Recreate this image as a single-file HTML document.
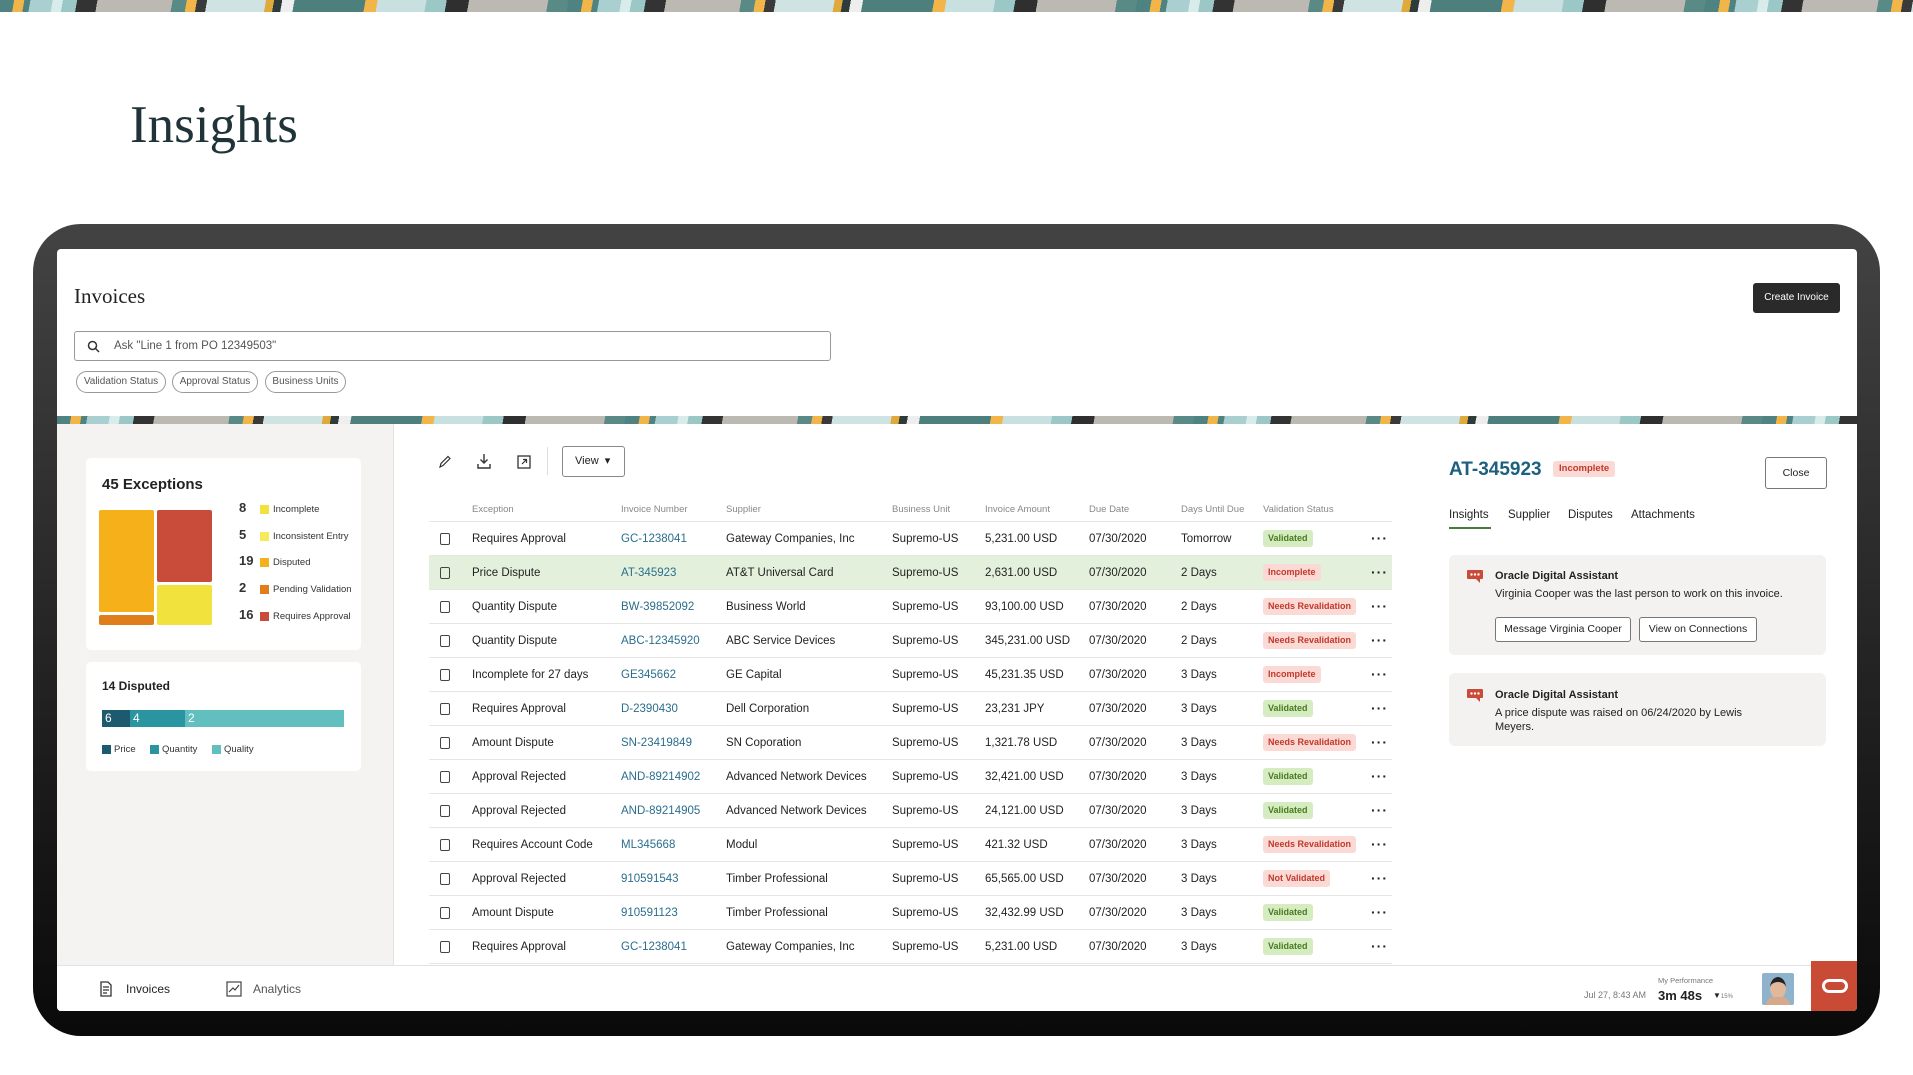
<!DOCTYPE html>
<html><head><meta charset="utf-8"><style>
*{box-sizing:border-box;margin:0;padding:0}
body{width:1913px;height:1075px;background:#fff;position:relative;overflow:hidden;font-family:"Liberation Sans",sans-serif;color:#222}
.abs{position:absolute}
.stripe{background:repeating-linear-gradient(100deg,#4e8381 0 14px,#f2b54a 14px 24px,#4e8381 24px 30px,#a9cfd0 30px 52px,#d9ecec 52px 62px,#9cc7c7 62px 76px,#333 76px 96px,#bcb8b2 96px 170px,#5a8a86 170px 184px,#f2b54a 184px 194px,#3a3a3a 194px 204px,#d0e3e3 204px 262px,#e0a93c 262px 270px,#2f3a3a 270px 278px,#eee 278px 290px,#4d7f7c 290px 360px,#f2b54a 360px 372px,#c9e0e0 372px 420px,#9cc7c7 420px 440px,#2f2f2f 440px 462px,#bcb8b2 462px 540px,#5a8a86 540px 560px)}
.serif{font-family:"Liberation Serif",serif}
.n{font-family:"Liberation Sans Narrow","Liberation Sans",sans-serif}
.chip{position:absolute;top:371px;height:22px;border:1px solid #999;border-radius:11px;font-size:10px;color:#555;line-height:20px;text-align:center}
.row{position:absolute;left:429px;width:963px;height:34px;border-bottom:1px solid #e6e6e6;font-size:11.5px}
.row span{position:absolute;top:11px;white-space:nowrap}
.cb{position:absolute;left:11px;top:11px;width:10px;height:12px;border:1.5px solid #444;border-radius:2px}
.lk{color:#2a6e8c}
.bd{position:absolute;top:8px;height:17px;border-radius:3px;font-size:9px;font-weight:bold;line-height:17px;padding:0 5px;white-space:nowrap}
.ok{background:#d4ecc0;color:#4a7a22}
.bad{background:#fbd9d4;color:#c0392b}
.dots{position:absolute;left:942px;top:8px;font-size:14px;font-weight:bold;letter-spacing:1px}
.hd{position:absolute;top:504px;font-size:9.5px;color:#888}
.lg{position:absolute;font-size:9.5px;color:#333}
.lg b{position:absolute;left:-34px;font-size:13px;top:-4px}
.lg i{position:absolute;left:-13px;top:1px;width:9px;height:9px}
.card{position:absolute;left:1449px;width:377px;background:#f3f2f0;border-radius:6px}
.btn{position:absolute;height:25px;border:1px solid #777;border-radius:3px;font-size:10.5px;line-height:23px;text-align:center;background:#fff}
</style></head><body>
<div class="abs stripe" style="left:0;top:0;width:1913px;height:12px"></div>
<div class="abs serif" style="left:130px;top:95px;font-size:53px;color:#1f3338">Insights</div>

<div class="abs" style="left:33px;top:224px;width:1847px;height:812px;border-radius:48px;background:linear-gradient(180deg,#434343,#1a1a1a 70%,#0a0a0a)"></div>
<div class="abs" style="left:57px;top:249px;width:1800px;height:762px;background:#fff;border-radius:4px;overflow:hidden">
</div>
<div class="abs serif" style="left:74px;top:284px;font-size:21px;color:#222">Invoices</div>
<div class="abs" style="left:1753px;top:283px;width:87px;height:30px;background:#2a2a2a;border-radius:3px;color:#fff;font-size:10px;line-height:30px;text-align:center">Create Invoice</div>
<div class="abs" style="left:74px;top:331px;width:757px;height:30px;border:1px solid #999;border-radius:3px"></div>
<svg class="abs" style="left:87px;top:340px" width="13" height="13" viewBox="0 0 13 13"><circle cx="5.5" cy="5.5" r="4" fill="none" stroke="#333" stroke-width="1.5"/><path d="M8.5 8.5L12 12" stroke="#333" stroke-width="1.5"/></svg>
<div class="abs n" style="left:114px;top:340px;font-size:11.5px;color:#555">Ask "Line 1 from PO 12349503"</div>
<div class="chip n" style="left:76px;width:90px">Validation Status</div>
<div class="chip n" style="left:172px;width:86px">Approval Status</div>
<div class="chip n" style="left:265px;width:81px">Business Units</div>
<div class="abs stripe" style="left:57px;top:416px;width:1800px;height:8px"></div>

<div class="abs" style="left:57px;top:424px;width:337px;height:541px;background:#f4f3f1;border-right:1px solid #e4e4e4"></div>
<div class="abs" style="left:86px;top:458px;width:275px;height:192px;background:#fff;border-radius:5px"></div>
<div class="abs" style="left:102px;top:476px;font-size:15px;font-weight:bold">45 Exceptions</div>
<div class="abs" style="left:99px;top:510px;width:55px;height:102px;background:#f6b01a;border-radius:2px"></div>
<div class="abs" style="left:99px;top:615px;width:55px;height:10px;background:#e07e1c;border-radius:2px"></div>
<div class="abs" style="left:157px;top:510px;width:55px;height:72px;background:#c94b3a;border-radius:2px"></div>
<div class="abs" style="left:157px;top:585px;width:55px;height:40px;background:#f2e23e;border-radius:2px"></div>
<div class="lg" style="left:273px;top:504px"><b>8</b><i style="background:#f2e23e"></i>Incomplete</div>
<div class="lg" style="left:273px;top:531px"><b>5</b><i style="background:#f5ea5a"></i>Inconsistent Entry</div>
<div class="lg" style="left:273px;top:557px"><b>19</b><i style="background:#f6b01a"></i>Disputed</div>
<div class="lg" style="left:273px;top:584px"><b>2</b><i style="background:#e07e1c"></i>Pending Validation</div>
<div class="lg" style="left:273px;top:611px"><b>16</b><i style="background:#c94b3a"></i>Requires Approval</div>

<div class="abs" style="left:86px;top:662px;width:275px;height:109px;background:#fff;border-radius:5px"></div>
<div class="abs" style="left:102px;top:679px;font-size:12px;font-weight:bold">14 Disputed</div>
<div class="abs" style="left:102px;top:710px;width:28px;height:17px;background:#1e5a6e;color:#fff;font-size:12px;padding-left:3px;line-height:17px">6</div>
<div class="abs" style="left:130px;top:710px;width:55px;height:17px;background:#2a95a0;color:#fff;font-size:12px;padding-left:3px;line-height:17px">4</div>
<div class="abs" style="left:185px;top:710px;width:159px;height:17px;background:#62bfc0;color:#fff;font-size:12px;padding-left:3px;line-height:17px">2</div>
<div class="lg" style="left:102px;top:744px"><i style="left:0;background:#1e5a6e"></i><span style="margin-left:12px">Price</span></div>
<div class="lg" style="left:150px;top:744px"><i style="left:0;background:#2a95a0"></i><span style="margin-left:12px">Quantity</span></div>
<div class="lg" style="left:212px;top:744px"><i style="left:0;background:#62bfc0"></i><span style="margin-left:12px">Quality</span></div>

<svg class="abs" style="left:437px;top:454px" width="16" height="16" viewBox="0 0 16 16"><path d="M3 13L4 9.5 11 2.5 13 4.5 6 11.5Z" fill="none" stroke="#333" stroke-width="1.2"/></svg>
<svg class="abs" style="left:476px;top:453px" width="16" height="17" viewBox="0 0 16 17"><path d="M8 1V10M4.5 6.5L8 10 11.5 6.5M2 11V15H14V11" fill="none" stroke="#333" stroke-width="1.4"/></svg>
<svg class="abs" style="left:516px;top:454px" width="16" height="16" viewBox="0 0 16 16"><rect x="2" y="2" width="12" height="12" fill="none" stroke="#333" stroke-width="1.3"/><path d="M6 10L10.5 5.5M7 5.5H10.5V9" fill="none" stroke="#333" stroke-width="1.2"/></svg>
<div class="abs" style="left:547px;top:447px;width:1px;height:28px;background:#ddd"></div>
<div class="abs n" style="left:562px;top:446px;width:63px;height:31px;border:1px solid #888;border-radius:3px;font-size:11px;line-height:29px;padding-left:12px">View &nbsp;&#9662;</div>

<div class="hd n" style="left:472px">Exception</div>
<div class="hd n" style="left:621px">Invoice Number</div>
<div class="hd n" style="left:726px">Supplier</div>
<div class="hd n" style="left:892px">Business Unit</div>
<div class="hd n" style="left:985px">Invoice Amount</div>
<div class="hd n" style="left:1089px">Due Date</div>
<div class="hd n" style="left:1181px">Days Until Due</div>
<div class="hd n" style="left:1263px">Validation Status</div>
<div class="abs" style="left:429px;top:521px;width:963px;height:1px;background:#e6e6e6"></div>

<div class="n">
<div class="row" style="top:522px"><i class="cb"></i><span style="left:43px">Requires Approval</span><span class="lk" style="left:192px">GC-1238041</span><span style="left:297px">Gateway Companies, Inc</span><span style="left:463px">Supremo-US</span><span style="left:556px">5,231.00 USD</span><span style="left:660px">07/30/2020</span><span style="left:752px">Tomorrow</span><b class="bd ok" style="left:834px">Validated</b><b class="dots">···</b></div>
<div class="row" style="top:556px;background:#e3f1dc"><i class="cb"></i><span style="left:43px">Price Dispute</span><span class="lk" style="left:192px">AT-345923</span><span style="left:297px">AT&amp;T Universal Card</span><span style="left:463px">Supremo-US</span><span style="left:556px">2,631.00 USD</span><span style="left:660px">07/30/2020</span><span style="left:752px">2 Days</span><b class="bd bad" style="left:834px">Incomplete</b><b class="dots">···</b></div>
<div class="row" style="top:590px"><i class="cb"></i><span style="left:43px">Quantity Dispute</span><span class="lk" style="left:192px">BW-39852092</span><span style="left:297px">Business World</span><span style="left:463px">Supremo-US</span><span style="left:556px">93,100.00 USD</span><span style="left:660px">07/30/2020</span><span style="left:752px">2 Days</span><b class="bd bad" style="left:834px">Needs Revalidation</b><b class="dots">···</b></div>
<div class="row" style="top:624px"><i class="cb"></i><span style="left:43px">Quantity Dispute</span><span class="lk" style="left:192px">ABC-12345920</span><span style="left:297px">ABC Service Devices</span><span style="left:463px">Supremo-US</span><span style="left:556px">345,231.00 USD</span><span style="left:660px">07/30/2020</span><span style="left:752px">2 Days</span><b class="bd bad" style="left:834px">Needs Revalidation</b><b class="dots">···</b></div>
<div class="row" style="top:658px"><i class="cb"></i><span style="left:43px">Incomplete for 27 days</span><span class="lk" style="left:192px">GE345662</span><span style="left:297px">GE Capital</span><span style="left:463px">Supremo-US</span><span style="left:556px">45,231.35 USD</span><span style="left:660px">07/30/2020</span><span style="left:752px">3 Days</span><b class="bd bad" style="left:834px">Incomplete</b><b class="dots">···</b></div>
<div class="row" style="top:692px"><i class="cb"></i><span style="left:43px">Requires Approval</span><span class="lk" style="left:192px">D-2390430</span><span style="left:297px">Dell Corporation</span><span style="left:463px">Supremo-US</span><span style="left:556px">23,231 JPY</span><span style="left:660px">07/30/2020</span><span style="left:752px">3 Days</span><b class="bd ok" style="left:834px">Validated</b><b class="dots">···</b></div>
<div class="row" style="top:726px"><i class="cb"></i><span style="left:43px">Amount Dispute</span><span class="lk" style="left:192px">SN-23419849</span><span style="left:297px">SN Coporation</span><span style="left:463px">Supremo-US</span><span style="left:556px">1,321.78 USD</span><span style="left:660px">07/30/2020</span><span style="left:752px">3 Days</span><b class="bd bad" style="left:834px">Needs Revalidation</b><b class="dots">···</b></div>
<div class="row" style="top:760px"><i class="cb"></i><span style="left:43px">Approval Rejected</span><span class="lk" style="left:192px">AND-89214902</span><span style="left:297px">Advanced Network Devices</span><span style="left:463px">Supremo-US</span><span style="left:556px">32,421.00 USD</span><span style="left:660px">07/30/2020</span><span style="left:752px">3 Days</span><b class="bd ok" style="left:834px">Validated</b><b class="dots">···</b></div>
<div class="row" style="top:794px"><i class="cb"></i><span style="left:43px">Approval Rejected</span><span class="lk" style="left:192px">AND-89214905</span><span style="left:297px">Advanced Network Devices</span><span style="left:463px">Supremo-US</span><span style="left:556px">24,121.00 USD</span><span style="left:660px">07/30/2020</span><span style="left:752px">3 Days</span><b class="bd ok" style="left:834px">Validated</b><b class="dots">···</b></div>
<div class="row" style="top:828px"><i class="cb"></i><span style="left:43px">Requires Account Code</span><span class="lk" style="left:192px">ML345668</span><span style="left:297px">Modul</span><span style="left:463px">Supremo-US</span><span style="left:556px">421.32 USD</span><span style="left:660px">07/30/2020</span><span style="left:752px">3 Days</span><b class="bd bad" style="left:834px">Needs Revalidation</b><b class="dots">···</b></div>
<div class="row" style="top:862px"><i class="cb"></i><span style="left:43px">Approval Rejected</span><span class="lk" style="left:192px">910591543</span><span style="left:297px">Timber Professional</span><span style="left:463px">Supremo-US</span><span style="left:556px">65,565.00 USD</span><span style="left:660px">07/30/2020</span><span style="left:752px">3 Days</span><b class="bd bad" style="left:834px">Not Validated</b><b class="dots">···</b></div>
<div class="row" style="top:896px"><i class="cb"></i><span style="left:43px">Amount Dispute</span><span class="lk" style="left:192px">910591123</span><span style="left:297px">Timber Professional</span><span style="left:463px">Supremo-US</span><span style="left:556px">32,432.99 USD</span><span style="left:660px">07/30/2020</span><span style="left:752px">3 Days</span><b class="bd ok" style="left:834px">Validated</b><b class="dots">···</b></div>
<div class="row" style="top:930px"><i class="cb"></i><span style="left:43px">Requires Approval</span><span class="lk" style="left:192px">GC-1238041</span><span style="left:297px">Gateway Companies, Inc</span><span style="left:463px">Supremo-US</span><span style="left:556px">5,231.00 USD</span><span style="left:660px">07/30/2020</span><span style="left:752px">3 Days</span><b class="bd ok" style="left:834px">Validated</b><b class="dots">···</b></div>
</div>

<div class="abs" style="left:1449px;top:459px;font-size:19px;font-weight:bold;color:#1d5f7e">AT-345923</div>
<div class="abs" style="left:1553px;top:461px;height:16px;padding:0 6px;background:#fbd9d4;color:#c0392b;font-size:9.5px;font-weight:bold;line-height:16px;border-radius:3px">Incomplete</div>
<div class="btn" style="left:1765px;top:457px;width:62px;height:32px;line-height:30px">Close</div>
<div class="abs" style="left:1449px;top:509px;font-size:11.5px">Insights</div>
<div class="abs" style="left:1449px;top:527px;width:42px;height:2px;background:#4a7a3a"></div>
<div class="abs" style="left:1508px;top:509px;font-size:11.5px">Supplier</div>
<div class="abs" style="left:1568px;top:509px;font-size:11.5px">Disputes</div>
<div class="abs" style="left:1631px;top:509px;font-size:11.5px">Attachments</div>

<div class="card" style="top:555px;height:100px"></div>
<svg class="abs" style="left:1466px;top:569px" width="18" height="15" viewBox="0 0 18 15"><path d="M2 1H16Q17 1 17 2V9Q17 10 16 10H14V14L10 10H2Q1 10 1 9V2Q1 1 2 1Z" fill="#c94b3a"/><circle cx="5.5" cy="5.5" r="1.2" fill="#fff"/><circle cx="9" cy="5.5" r="1.2" fill="#fff"/><circle cx="12.5" cy="5.5" r="1.2" fill="#fff"/></svg>
<div class="abs" style="left:1495px;top:570px;font-size:11px;font-weight:bold">Oracle Digital Assistant</div>
<div class="abs" style="left:1495px;top:588px;font-size:11px">Virginia Cooper was the last person to work on this invoice.</div>
<div class="btn" style="left:1495px;top:617px;width:136px">Message Virginia Cooper</div>
<div class="btn" style="left:1639px;top:617px;width:118px">View on Connections</div>
<div class="card" style="top:673px;height:73px"></div>
<svg class="abs" style="left:1466px;top:688px" width="18" height="15" viewBox="0 0 18 15"><path d="M2 1H16Q17 1 17 2V9Q17 10 16 10H14V14L10 10H2Q1 10 1 9V2Q1 1 2 1Z" fill="#c94b3a"/><circle cx="5.5" cy="5.5" r="1.2" fill="#fff"/><circle cx="9" cy="5.5" r="1.2" fill="#fff"/><circle cx="12.5" cy="5.5" r="1.2" fill="#fff"/></svg>
<div class="abs" style="left:1495px;top:689px;font-size:11px;font-weight:bold">Oracle Digital Assistant</div>
<div class="abs" style="left:1495px;top:706px;font-size:11px;width:265px;line-height:14px">A price dispute was raised on 06/24/2020 by Lewis Meyers.</div>

<div class="abs" style="left:57px;top:965px;width:1800px;height:46px;background:#fff;border-top:1px solid #e2e2e2;border-radius:0 0 4px 4px"></div>
<svg class="abs" style="left:99px;top:981px" width="14" height="16" viewBox="0 0 14 16"><path d="M2 1H9L12 4V15H2Z M4 6H10M4 9H10M4 12H8" fill="none" stroke="#333" stroke-width="1.3"/></svg>
<div class="abs" style="left:126px;top:982px;font-size:12px">Invoices</div>
<svg class="abs" style="left:226px;top:981px" width="16" height="16" viewBox="0 0 16 16"><rect x="1" y="1" width="14" height="14" fill="none" stroke="#444" stroke-width="1.2"/><path d="M3 11L7 7 9 9 13 4" fill="none" stroke="#444" stroke-width="1.2"/></svg>
<div class="abs" style="left:253px;top:982px;font-size:12px;color:#555">Analytics</div>
<div class="abs" style="left:1584px;top:990px;font-size:9px;color:#777">Jul 27, 8:43 AM</div>
<div class="abs" style="left:1658px;top:976px;font-size:7.5px;color:#777">My Performance</div>
<div class="abs" style="left:1658px;top:988px;font-size:13px;font-weight:bold">3m 48s</div>
<div class="abs" style="left:1713px;top:991px;font-size:8px">&#9660;<span style="font-size:6px;color:#777">15%</span></div>
<div class="abs" style="left:1762px;top:973px;width:32px;height:32px;background:#8fb3cc;border-radius:2px;overflow:hidden"><div style="position:absolute;left:8px;top:4px;width:16px;height:22px;border-radius:50%;background:#e0b89c;border-top:5px solid #222"></div><div style="position:absolute;left:4px;top:24px;width:24px;height:10px;background:#d6a88c;border-radius:8px 8px 0 0"></div></div>
<div class="abs" style="left:1811px;top:961px;width:46px;height:50px;background:#c94a35;border-radius:0 0 4px 0"></div>
<div class="abs" style="left:1822px;top:979px;width:26px;height:14px;border:3px solid #fff;border-radius:7px"></div>
</body></html>
